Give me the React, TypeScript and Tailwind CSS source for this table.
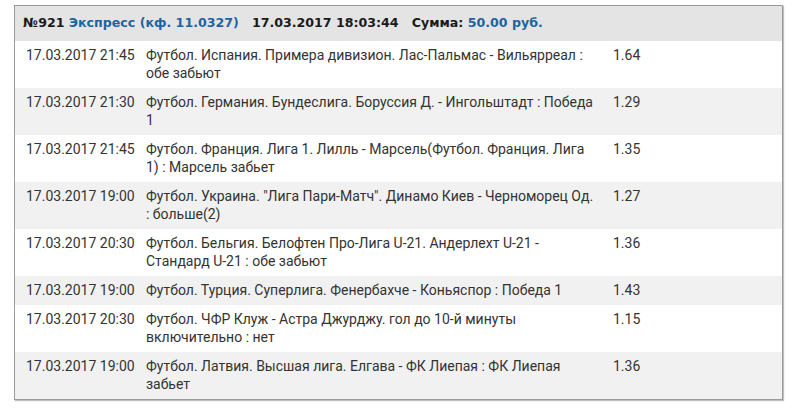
import React from 'react';

interface Bet {
  date: string;
  event: string;
  odds: string;
}

const BETS: Bet[] = [
  { date: '17.03.2017 21:45', event: 'Футбол. Испания. Примера дивизион. Лас-Пальмас - Вильярреал : обе забьют', odds: '1.64' },
  { date: '17.03.2017 21:30', event: 'Футбол. Германия. Бундеслига. Боруссия Д. - Ингольштадт : Победа 1', odds: '1.29' },
  { date: '17.03.2017 21:45', event: 'Футбол. Франция. Лига 1. Лилль - Марсель(Футбол. Франция. Лига 1) : Марсель забьет', odds: '1.35' },
  { date: '17.03.2017 19:00', event: 'Футбол. Украина. "Лига Пари-Матч". Динамо Киев - Черноморец Од. : больше(2)', odds: '1.27' },
  { date: '17.03.2017 20:30', event: 'Футбол. Бельгия. Белофтен Про-Лига U-21. Андерлехт U-21 - Стандард U-21 : обе забьют', odds: '1.36' },
  { date: '17.03.2017 19:00', event: 'Футбол. Турция. Суперлига. Фенербахче - Коньяспор : Победа 1', odds: '1.43' },
  { date: '17.03.2017 20:30', event: 'Футбол. ЧФР Клуж - Астра Джурджу. гол до 10-й минуты включительно : нет', odds: '1.15' },
  { date: '17.03.2017 19:00', event: 'Футбол. Латвия. Высшая лига. Елгава - ФК Лиепая : ФК Лиепая забьет', odds: '1.36' }
];

export default function App() {
  return (
    <div className="w-[795px] h-[410px] bg-white pt-[5px] pl-[14px]">
      <div className="w-[769px] border border-[#9a9a9a] shadow-[1px_1px_1px_rgba(0,0,0,0.25)] bg-white">
        {/* Header */}
        <div className="h-[35px] bg-[#e4e4e4] flex items-center pl-[8px] text-[12.6px] font-bold text-[#1a1a1a] font-['DejaVu_Sans',Verdana,sans-serif] whitespace-pre">
          <span>№921 </span>
          <span className="text-[#1c64a0]">Экспресс (кф. 11.0327)</span>
          <span>   17.03.2017 18:03:44   Сумма: </span>
          <span className="text-[#1c64a0]">50.00 руб.</span>
        </div>

        {/* Rows */}
        <div className="font-['Roboto',sans-serif] text-[14px] leading-[18px] text-[#333]">
          {BETS.map((bet, i) => (
            <div
              key={i}
              className={`grid grid-cols-[131px_467px_1fr] pt-[5px] pb-[6px] ${i % 2 === 1 ? 'bg-[#f1f1f1]' : 'bg-white'}`}
            >
              <div className="pl-[11px]">{bet.date}</div>
              <div className="pr-[17px]">{bet.event}</div>
              <div>{bet.odds}</div>
            </div>
          ))}
        </div>
      </div>
    </div>
  );
}
